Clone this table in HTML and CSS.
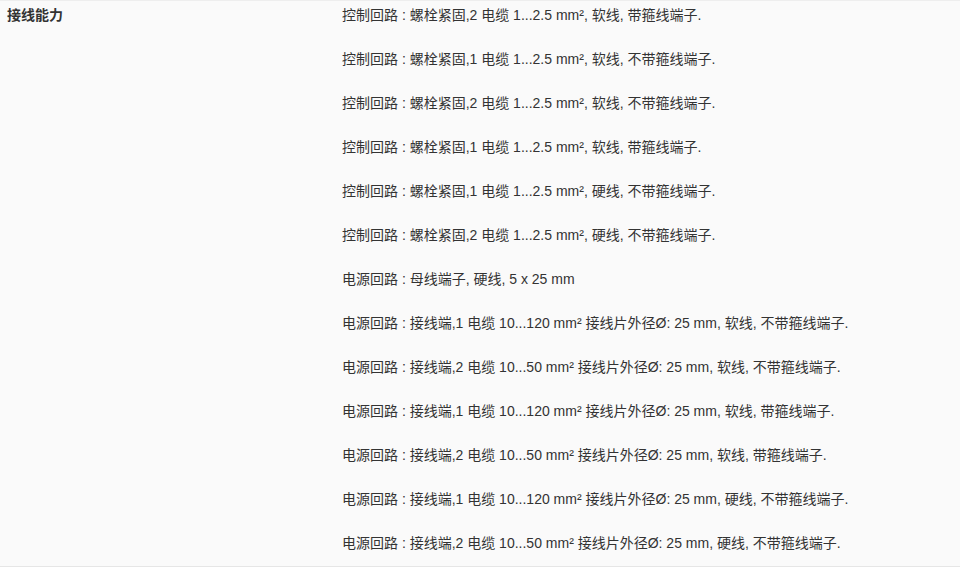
FILE: index.html
```html
<!DOCTYPE html>
<html>
    <head>
        <meta charset="UTF-8">
        <meta name="viewport" content="width=device-width, initial-scale=1.0">
        <title>接线能力</title>
        <link rel="stylesheet" href="styles.css">
    </head>

    <body>
        <div class="spec-row">
            <div class="spec-label">接线能力</div>
            <ul class="spec-values">
                <li>控制回路 : 螺栓紧固,2 电缆 1...2.5 mm², 软线, 带箍线端子.</li>
                <li>控制回路 : 螺栓紧固,1 电缆 1...2.5 mm², 软线, 不带箍线端子.</li>
                <li>控制回路 : 螺栓紧固,2 电缆 1...2.5 mm², 软线, 不带箍线端子.</li>
                <li>控制回路 : 螺栓紧固,1 电缆 1...2.5 mm², 软线, 带箍线端子.</li>
                <li>控制回路 : 螺栓紧固,1 电缆 1...2.5 mm², 硬线, 不带箍线端子.</li>
                <li>控制回路 : 螺栓紧固,2 电缆 1...2.5 mm², 硬线, 不带箍线端子.</li>
                <li>电源回路 : 母线端子, 硬线, 5 x 25 mm</li>
                <li>电源回路 : 接线端,1 电缆 10...120 mm² 接线片外径Ø: 25 mm, 软线, 不带箍线端子.</li>
                <li>电源回路 : 接线端,2 电缆 10...50 mm² 接线片外径Ø: 25 mm, 软线, 不带箍线端子.</li>
                <li>电源回路 : 接线端,1 电缆 10...120 mm² 接线片外径Ø: 25 mm, 软线, 带箍线端子.</li>
                <li>电源回路 : 接线端,2 电缆 10...50 mm² 接线片外径Ø: 25 mm, 软线, 带箍线端子.</li>
                <li>电源回路 : 接线端,1 电缆 10...120 mm² 接线片外径Ø: 25 mm, 硬线, 不带箍线端子.</li>
                <li>电源回路 : 接线端,2 电缆 10...50 mm² 接线片外径Ø: 25 mm, 硬线, 不带箍线端子.</li>
            </ul>
        </div>
    </body>
</html>
```

FILE: styles.css
```css
body {
    margin: 0;
    background-color: #fff;
    font-family: "Liberation Sans", Arial, "Noto Sans CJK SC", sans-serif;
    font-size: 14px;
    color: #333;
}
.spec-row {
    display: flex;
    background-color: #fafafa;
    border-top: 1px solid #eee;
    border-bottom: 1px solid #e6e6e6;
}
.spec-label {
    width: 335px;
    padding: 4px 0 0 7px;
    line-height: 20px;
    font-weight: bold;
}
.spec-values {
    list-style: none;
    margin: 0;
    padding: 4px 0 13px 0;
    display: flex;
    flex-direction: column;
    gap: 24px;
}
.spec-values li {
    line-height: 20px;
}
```
